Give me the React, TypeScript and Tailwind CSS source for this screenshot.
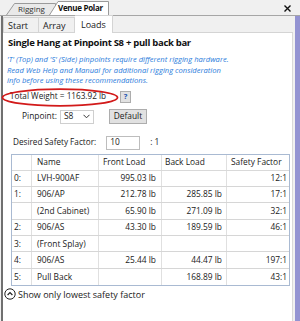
import React from "react";

const rows: string[][] = [
  ["0:", "LVH-900AF", "995.03 lb", "", "12:1"],
  ["1:", "906/AP", "212.78 lb", "285.85 lb", "17:1"],
  ["", "(2nd Cabinet)", "65.90 lb", "271.09 lb", "32:1"],
  ["2:", "906/AS", "43.30 lb", "189.59 lb", "46:1"],
  ["3:", "(Front Splay)", "", "", ""],
  ["4:", "906/AS", "25.44 lb", "44.47 lb", "197:1"],
  ["5:", "Pull Back", "", "168.89 lb", "43:1"],
];

export default function App() {
  return (
    <div className="w-[300px] h-[321px] bg-[#f0f0f0] overflow-hidden text-[#1a1a1a] font-['Open_Sans',sans-serif] flex flex-col">
      {/* top tab strip */}
      <div className="h-[16px] shrink-0 flex items-end border-b border-[#a6a6a6] pl-[6px]">
        <div className="relative w-[50px] h-[12px] flex items-center">
          <svg className="absolute inset-0" width="50" height="12" viewBox="0 0 50 12">
            <path d="M0.5 12 L8.5 0.5 L49.5 0.5 L49.5 12" fill="#e9e9e9" stroke="#9a9a9a" />
          </svg>
          <span className="relative pl-[12px] text-[8px] leading-none whitespace-nowrap text-[#333]">Rigging</span>
        </div>
        <div className="relative w-[60px] h-[14px] -ml-[7px] flex items-center">
          <svg className="absolute inset-0" width="60" height="14" viewBox="0 0 60 14">
            <path d="M0.5 14 L9 0.5 L59.5 0.5 L59.5 14" fill="#ffffff" stroke="#9a9a9a" />
          </svg>
          <span className="relative pl-[9px] text-[8px] leading-none tracking-[-0.3px] whitespace-nowrap font-bold text-[#111]">Venue Polar</span>
        </div>
        <div className="flex-1" />
        <svg className="mb-[3px] mr-[9px]" width="7" height="7" viewBox="0 0 7 7">
          <path d="M0.5 0.5 L6.5 6.5 M6.5 0.5 L0.5 6.5" stroke="#111" strokeWidth="1.4" />
        </svg>
      </div>

      <div className="flex flex-1 min-h-0">
        <div className="w-[1px] shrink-0" />
        <div className="w-[2px] shrink-0 bg-[#707070]" />
        <div className="flex-1 flex flex-col min-w-0">
          {/* sub tabs */}
          <div className="h-[17px] shrink-0 flex items-end border-b border-[#d4d4d4]">
            <div className="w-[36px] h-[15px] border border-b-0 border-[#d4d4d4] bg-[#f0f0f0] flex items-center pl-[4px] text-[9px] leading-none">
              Start
            </div>
            <div className="w-[36px] h-[15px] border border-b-0 border-l-0 border-[#d4d4d4] bg-[#f0f0f0] flex items-center pl-[4px] text-[9px] leading-none">
              Array
            </div>
            <div className="w-[38px] h-[18px] -mb-[1px] border border-b-0 border-l-0 border-[#d4d4d4] bg-white flex items-center pl-[6px] text-[9px] leading-none">
              Loads
            </div>
          </div>

          {/* panel */}
          <div className="flex-1 bg-white border-r border-[#d9d9d9] flex flex-col">
            <div className="pl-[5px] pt-[4px] text-[9.5px] leading-[12px] font-bold tracking-[-0.3px] text-[#111] whitespace-nowrap">
              Single Hang at Pinpoint S8 + pull back bar
            </div>
            <div className="pl-[4px] pt-[5px] text-[7.6px] leading-[10.5px] italic text-[#2a7bdb] whitespace-nowrap">
              <div>'T' (Top) and 'S' (Side) pinpoints require different rigging hardware.</div>
              <div>Read Web Help and Manual for additional rigging consideration</div>
              <div>info before using these recommendations.</div>
            </div>

            <div className="relative h-[18px] mt-[2px] flex items-center">
              <span className="pl-[7px] text-[8.2px] leading-none whitespace-nowrap">Total Weight = 1163.92 lb</span>
              <div className="ml-[14px] w-[11px] h-[12px] border border-[#adadad] bg-[#e1e1e1] flex items-center justify-center text-[7.5px] font-bold text-[#1a50b0] leading-none">
                ?
              </div>
              <svg className="absolute left-[-2px] top-[0px]" width="120" height="19" viewBox="0 0 120 19">
                <ellipse cx="59" cy="9.5" rx="57.5" ry="8.4" fill="none" stroke="#d21a1a" strokeWidth="1.8" />
              </svg>
            </div>

            <div className="h-[16px] mt-[3px] flex items-center">
              <span className="pl-[19px] text-[8.4px] leading-none">Pinpoint:</span>
              <div className="ml-[3px] w-[34px] h-[14px] border border-[#cfcfcf] flex items-center justify-between pl-[3px] pr-[3px]">
                <span className="text-[8.4px] leading-none">S8</span>
                <svg width="7" height="5" viewBox="0 0 7 5">
                  <path d="M0.5 0.8 L3.5 3.8 L6.5 0.8" fill="none" stroke="#333" strokeWidth="1" />
                </svg>
              </div>
              <div className="ml-[15px] w-[38px] h-[15px] border border-[#adadad] bg-[#e1e1e1] flex items-center justify-center text-[8.4px] leading-none">
                Default
              </div>
            </div>

            <div className="h-[16px] mt-[10px] flex items-center">
              <span className="pl-[10px] text-[8.2px] leading-none whitespace-nowrap">Desired Safety Factor:</span>
              <div className="ml-[10px] w-[34px] h-[14px] border border-[#bdbdbd] flex items-center pl-[3px] text-[8.4px] leading-none">
                10
              </div>
              <span className="ml-[10px] text-[8.4px] leading-none">: 1</span>
            </div>

            <div className="ml-[8px] mt-[3px] w-[279px] border border-[#a9bad2]">
              <div className="flex h-[16px] border-b border-[#d9d9d9] text-[8.4px] leading-none items-center">
                <div className="w-[20px] h-full border-r border-[#e0e0e0]" />
                <div className="w-[67px] h-full border-r border-[#e0e0e0] flex items-center pl-[5px]">Name</div>
                <div className="w-[63px] h-full border-r border-[#e0e0e0] flex items-center pl-[4px]">Front Load</div>
                <div className="w-[65px] h-full border-r border-[#e0e0e0] flex items-center pl-[3px]">Back Load</div>
                <div className="flex-1 h-full flex items-center pl-[4px]">Safety Factor</div>
              </div>
              {rows.map((r, i) => (
                <div
                  key={i}
                  className={`flex h-[16.4px] text-[8.4px] leading-none items-center ${i < rows.length - 1 ? "border-b border-[#d6d6d6]" : ""}`}
                >
                  <div className="w-[20px] h-full border-r border-[#e0e0e0] flex items-center pl-[2px]">{r[0]}</div>
                  <div className="w-[67px] h-full border-r border-[#e0e0e0] flex items-center pl-[5px]">{r[1]}</div>
                  <div className="w-[63px] h-full border-r border-[#e0e0e0] flex items-center justify-end pr-[5px]">{r[2]}</div>
                  <div className="w-[65px] h-full border-r border-[#e0e0e0] flex items-center justify-end pr-[4px]">{r[3]}</div>
                  <div className="flex-1 h-full flex items-center justify-end pr-[2px]">{r[4]}</div>
                </div>
              ))}
            </div>

            <div className="flex items-center mt-[2px] pl-[1px]">
              <svg width="12" height="12" viewBox="0 0 12 12">
                <circle cx="6" cy="6" r="5.2" fill="none" stroke="#222" strokeWidth="1" />
                <path d="M3.6 7 L6 4.6 L8.4 7" fill="none" stroke="#222" strokeWidth="1.2" />
              </svg>
              <span className="ml-[2px] text-[9px] leading-none whitespace-nowrap">Show only lowest safety factor</span>
            </div>
          </div>
        </div>
        <div className="w-[2px] shrink-0" />
        <div className="w-[5px] shrink-0 bg-[#9393d2]" />
      </div>
    </div>
  );
}
